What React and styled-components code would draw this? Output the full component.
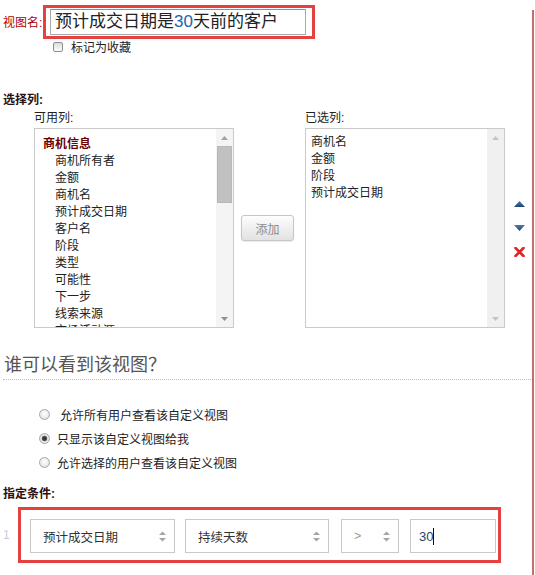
import React from "react";
import styled, { createGlobalStyle } from "styled-components";

const GlobalStyle = createGlobalStyle`
  html, body { margin: 0; padding: 0; background: #fff; }
  body {
    font-family: "Liberation Sans", "Noto Sans CJK SC", sans-serif;
    font-size: 12px;
    color: #222;
  }
  * { box-sizing: border-box; }
`;

const Page = styled.div`
  position: relative;
  width: 535px;
  height: 575px;
  padding: 4px 0 0 3px;
  overflow: hidden;
  &::after {
    content: "";
    position: absolute;
    top: 10px;
    bottom: 0;
    right: 1px;
    width: 2px;
    background: #c46d6d;
  }
`;

const NameRow = styled.div`
  display: flex;
  align-items: center;
  height: 35px;
`;

const NameLabel = styled.span`
  width: 40px;
  color: #b00000;
  font-size: 12px;
`;

const Highlight = styled.div`
  border: 3px solid #e5423f;
  padding: ${(p) => p.$pad};
  display: flex;
  align-items: center;
`;

const NameInput = styled.div`
  width: 256px;
  height: 26px;
  border: 1px solid #a9a9a9;
  border-top-color: #8e8e8e;
  padding-left: 4px;
  font-size: 17px;
  line-height: 24px;
  color: #222;
  white-space: nowrap;
`;

const Digits = styled.span`
  color: ${(p) => p.$color};
`;

const FavRow = styled.div`
  display: flex;
  align-items: center;
  gap: 8px;
  height: 13px;
  margin: 1px 0 0 50px;
`;

const CheckBox = styled.span`
  width: 10px;
  height: 10px;
  border: 1px solid #8f8f8f;
  border-radius: 2px;
  background: linear-gradient(#dcdcdc, #fbfbfb);
`;

const SectionTitle = styled.div`
  margin-top: ${(p) => p.$mt}px;
  font-weight: bold;
  line-height: 16px;
  color: #2a1010;
`;

const ColumnsRow = styled.div`
  display: flex;
  margin: 2px 0 0 31px;
`;

const Column = styled.div`
  display: flex;
  flex-direction: column;
  width: 200px;
`;

const ColumnLabel = styled.div`
  line-height: 16px;
  margin-bottom: 2px;
  color: #222;
`;

const ListBox = styled.div`
  display: flex;
  width: 200px;
  height: 200px;
  border: 1px solid #cacaca;
  overflow: hidden;
`;

const ListContent = styled.div`
  flex: 1;
  padding: ${(p) => p.$pad};
  overflow: hidden;
`;

const ListItem = styled.div`
  line-height: 17px;
  white-space: nowrap;
  padding-left: ${(p) => (p.$group ? 0 : p.$indent || 0)}px;
  font-weight: ${(p) => (p.$group ? "bold" : "normal")};
  color: ${(p) => (p.$group ? "#6a0000" : "#222")};
`;

const ScrollBar = styled.div`
  display: flex;
  flex-direction: column;
  width: 17px;
  background: ${(p) => (p.$disabled ? "#f0f0f0" : "#f4f4f4")};
`;

const ArrowBox = styled.div`
  height: 17px;
  display: flex;
  align-items: center;
  justify-content: center;
  color: ${(p) => (p.$disabled ? "#c0c0c0" : "#a3a3a3")};
`;

const Thumb = styled.div`
  height: 57px;
  margin: 0 1px;
  background: #c1c1c1;
  border: 1px solid #b8b8b8;
`;

const Spacer = styled.div`
  flex: 1;
`;

const Middle = styled.div`
  display: flex;
  align-items: center;
  padding-top: 18px;
  margin: ${(p) => p.$margin};
`;

const AddButton = styled.button`
  width: 53px;
  height: 26px;
  border: 1px solid #c6c6c6;
  border-radius: 3px;
  background: linear-gradient(#fdfdfd, #e2e2e2);
  box-shadow: 0 1px 1px rgba(0, 0, 0, 0.08);
  color: #8a8a8a;
  font-family: inherit;
  font-size: 12px;
  padding: 0;
`;

const IconColumn = styled.div`
  display: flex;
  flex-direction: column;
  width: 11px;
`;

const IconCell = styled.div`
  height: 24px;
  display: flex;
  align-items: center;
  justify-content: center;
`;

const Heading = styled.div`
  margin-top: 25px;
  width: 528px;
  padding: 0 0 2px 1px;
  font-size: 18px;
  line-height: 24px;
  color: #555;
  border-bottom: 1px dotted #bdbdbd;
`;

const RadioList = styled.div`
  margin: 22px 0 0 36px;
`;

const RadioRow = styled.label`
  display: flex;
  align-items: center;
  height: 24px;
  gap: ${(p) => p.$gap}px;
  color: #222;
`;

const Radio = styled.span`
  width: 11px;
  height: 11px;
  border-radius: 50%;
  border: 1px solid #a8a8a8;
  background: ${(p) =>
    p.$checked
      ? "radial-gradient(circle, #3a3a3a 0 1.8px, #7a7a7a 2.6px, #ececec 3.2px, #d6d6d6 100%)"
      : "radial-gradient(circle at 50% 40%, #ffffff 0, #f2f2f2 40%, #d4d4d4 100%)"};
`;

const CondRow = styled.div`
  display: flex;
  align-items: center;
  margin-top: 5px;
`;

const RowNum = styled.span`
  width: 15px;
  color: #c8cbd8;
`;

const CondBox = styled(Highlight)`
  width: 483px;
`;

const SelectBox = styled.div`
  display: flex;
  align-items: center;
  justify-content: space-between;
  width: ${(p) => p.$w}px;
  height: 34px;
  margin-left: ${(p) => p.$ml || 0}px;
  padding: 0 8px 0 12px;
  border: 1px solid #c9c9c9;
  font-size: 12.5px;
  color: ${(p) => p.$color || "#333"};
`;

const ValueInput = styled.div`
  display: flex;
  align-items: center;
  width: 86px;
  height: 34px;
  margin-left: 11px;
  padding-left: 8px;
  border: 1px solid #c9c9c9;
  font-size: 13px;
  color: #2b3f6b;
`;

const Caret = styled.span`
  width: 1px;
  height: 17px;
  background: #111;
`;

const Tri = ({ down, color }) => (
  <svg width="7" height="4" viewBox="0 0 7 4">
    <polygon points={down ? "0,0 7,0 3.5,4" : "0,4 7,4 3.5,0"} fill={color} />
  </svg>
);

const Spinner = () => (
  <svg width="7" height="11" viewBox="0 0 7 11">
    <polygon points="0,4 7,4 3.5,0.5" fill="#a5a5a5" />
    <polygon points="0,7 7,7 3.5,10.5" fill="#a5a5a5" />
  </svg>
);

const MoveIcon = ({ down }) => (
  <svg width="11" height="6" viewBox="0 0 11 6">
    <defs>
      <linearGradient id={down ? "gd" : "gu"} x1="0" y1="0" x2="0" y2="1">
        <stop offset="0" stopColor="#4b7cab" />
        <stop offset="1" stopColor="#1d4670" />
      </linearGradient>
    </defs>
    <polygon
      points={down ? "0,0 11,0 5.5,6" : "0,6 11,6 5.5,0"}
      fill={`url(#${down ? "gd" : "gu"})`}
    />
  </svg>
);

const RemoveIcon = () => (
  <svg width="11" height="10" viewBox="0 0 11 10">
    <path d="M1.5 1 L9.5 9 M9.5 1 L1.5 9" stroke="#e02525" strokeWidth="2.6" strokeLinecap="round" />
  </svg>
);

const Scroll = ({ disabled }) => (
  <ScrollBar $disabled={disabled}>
    <ArrowBox $disabled={disabled}>
      <Tri color={disabled ? "#c4c4c4" : "#a3a3a3"} />
    </ArrowBox>
    {!disabled && <Thumb />}
    <Spacer />
    <ArrowBox $disabled={disabled}>
      <Tri down color={disabled ? "#c4c4c4" : "#8f8f8f"} />
    </ArrowBox>
  </ScrollBar>
);

const available = [
  "商机所有者",
  "金额",
  "商机名",
  "预计成交日期",
  "客户名",
  "阶段",
  "类型",
  "可能性",
  "下一步",
  "线索来源",
  "市场活动源",
];

const selected = ["商机名", "金额", "阶段", "预计成交日期"];

const radios = [
  { label: "允许所有用户查看该自定义视图", gap: 10 },
  { label: "只显示该自定义视图给我", gap: 7, checked: true },
  { label: "允许选择的用户查看该自定义视图", gap: 7 },
];

export default function App() {
  return (
    <>
      <GlobalStyle />
      <Page>
        <NameRow>
          <NameLabel>视图名:</NameLabel>
          <Highlight $pad="1px 6px 1px 4px">
            <NameInput>
              预计成交日期是<Digits $color="#2563a8">30</Digits>天前的客户
            </NameInput>
          </Highlight>
        </NameRow>
        <FavRow>
          <CheckBox />
          <span>标记为收藏</span>
        </FavRow>

        <SectionTitle $mt={39}>选择列:</SectionTitle>
        <ColumnsRow>
          <Column>
            <ColumnLabel>可用列:</ColumnLabel>
            <ListBox>
              <ListContent $pad="7px 0 0 8px">
                <ListItem $group>商机信息</ListItem>
                {available.map((t) => (
                  <ListItem key={t} $indent={12}>
                    {t}
                  </ListItem>
                ))}
              </ListContent>
              <Scroll />
            </ListBox>
          </Column>
          <Middle $margin="0 11px 0 7px">
            <AddButton>添加</AddButton>
          </Middle>
          <Column>
            <ColumnLabel>已选列:</ColumnLabel>
            <ListBox>
              <ListContent $pad="5px 0 0 5px">
                {selected.map((t) => (
                  <ListItem key={t}>{t}</ListItem>
                ))}
              </ListContent>
              <Scroll disabled />
            </ListBox>
          </Column>
          <Middle $margin="0 0 0 9px">
            <IconColumn>
              <IconCell>
                <MoveIcon />
              </IconCell>
              <IconCell>
                <MoveIcon down />
              </IconCell>
              <IconCell>
                <RemoveIcon />
              </IconCell>
            </IconColumn>
          </Middle>
        </ColumnsRow>

        <Heading>谁可以看到该视图？</Heading>
        <RadioList>
          {radios.map((r) => (
            <RadioRow key={r.label} $gap={r.gap}>
              <Radio $checked={r.checked} />
              <span>{r.label}</span>
            </RadioRow>
          ))}
        </RadioList>

        <SectionTitle $mt={12}>指定条件:</SectionTitle>
        <CondRow>
          <RowNum>1</RowNum>
          <CondBox $pad="9px 2px 7px 9px">
            <SelectBox $w={145}>
              <span>预计成交日期</span>
              <Spinner />
            </SelectBox>
            <SelectBox $w={144} $ml={10}>
              <span>持续天数</span>
              <Spinner />
            </SelectBox>
            <SelectBox $w={58} $ml={12} $color="#999">
              <span>&gt;</span>
              <Spinner />
            </SelectBox>
            <ValueInput>
              <span>30</span>
              <Caret />
            </ValueInput>
          </CondBox>
        </CondRow>
      </Page>
    </>
  );
}
